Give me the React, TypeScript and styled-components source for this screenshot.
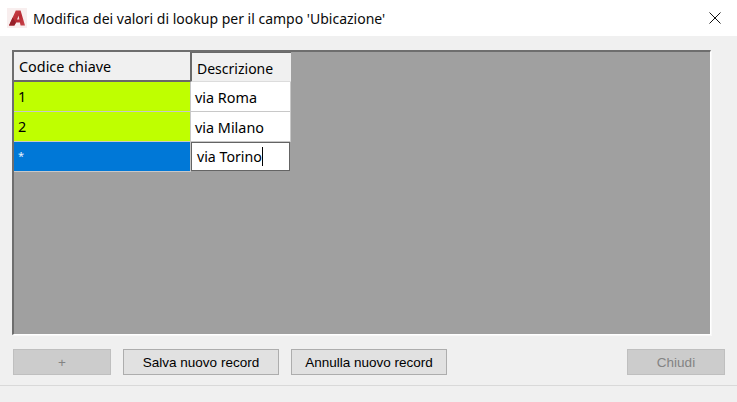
import React from "react";
import styled, { createGlobalStyle } from "styled-components";

const Global = createGlobalStyle`
  html, body { margin: 0; padding: 0; background: #f0f0f0; }
  #root { width: 737px; height: 402px; overflow: hidden; }
`;

const Dialog = styled.div`
  width: 737px;
  height: 402px;
  display: flex;
  flex-direction: column;
  background: #f0f0f0;
  font-family: "Noto Sans", "Open Sans", sans-serif;
  color: #000;
`;

const TitleBar = styled.header`
  height: 36px;
  flex: none;
  background: #fff;
  display: flex;
  align-items: center;
  padding: 0 16px 0 7px;
  box-sizing: border-box;
`;

const Title = styled.div`
  margin-left: 6px;
  font-size: 14px;
  flex: 1;
  white-space: nowrap;
  color: #0a0a0a;
`;

const Body = styled.main`
  flex: none;
  padding: 14px 26px 0 12px;
  height: 299px;
  box-sizing: border-box;
`;

const GridArea = styled.div`
  box-sizing: border-box;
  height: 285px;
  background: #a0a0a0;
  border: 2px solid #6e6e6e;
  border-right: 1px solid #fff;
  border-bottom: 1px solid #fff;
  box-shadow: 1px 1px 0 #f8f8f8;
`;

const Table = styled.div`
  display: grid;
  grid-template-columns: 177px 100px;
  grid-template-rows: 30px 30px 30px 30px;
  width: 277px;
`;

const Header = styled.div<{ $second?: boolean }>`
  box-sizing: border-box;
  background: #f0f0f0;
  font-size: ${(p) => (p.$second ? "14px" : "14.4px")};
  display: flex;
  align-items: center;
  padding-left: 5px;
  padding-top: ${(p) => (p.$second ? "2px" : "0")};
  margin-left: ${(p) => (p.$second ? "-1px" : "0")};
  border-bottom: ${(p) => (p.$second ? "1px solid #dcdcdc" : "2px solid #696969")};
  border-left: ${(p) => (p.$second ? "2px solid #696969" : "none")};
  border-top: ${(p) => (p.$second ? "1px solid #696969" : "none")};
`;

const KeyCell = styled.div<{ $active?: boolean }>`
  box-sizing: border-box;
  background: ${(p) => (p.$active ? "#0078d7" : "#bfff00")};
  color: ${(p) => (p.$active ? "#e8f2ff" : "#000")};
  font-size: ${(p) => (p.$active ? "11px" : "14.4px")};
  display: flex;
  align-items: center;
  padding-left: 4px;
  padding-bottom: ${(p) => (p.$active ? "2px" : "0")};
  border-right: 1px solid #c8c8c8;
  border-bottom: 1px solid #c8c8c8;
`;

const ValueCell = styled.div`
  box-sizing: border-box;
  background: #fff;
  font-size: 14.4px;
  display: flex;
  align-items: center;
  padding: 2px 0 0 4px;
  border-right: 1px solid #c8c8c8;
  border-bottom: 1px solid #c8c8c8;
`;

const EditCell = styled.div`
  box-sizing: border-box;
  background: #fff;
  font-size: 14.2px;
  display: flex;
  align-items: center;
  padding-left: 5px;
  margin: 0 1px 1px 0;
  border: 1px solid #646464;
`;

const Caret = styled.span`
  display: inline-block;
  width: 1px;
  height: 19px;
  background: #000;
`;

const Footer = styled.div`
  flex: none;
  height: 51px;
  box-sizing: border-box;
  padding: 14px 12px 0 13px;
  display: flex;
  gap: 12px;
  border-bottom: 1px solid #d9d9d9;
`;

const Button = styled.button<{ $w: number; $push?: boolean }>`
  width: ${(p) => p.$w}px;
  height: 26px;
  box-sizing: border-box;
  margin: 0 0 0 ${(p) => (p.$push ? "auto" : "0")};
  padding: 0;
  background: #e1e1e1;
  border: 1px solid #adadad;
  border-radius: 0;
  font-family: "Liberation Sans", Arial, sans-serif;
  font-size: 13.5px;
  color: #000;
  &:disabled {
    background: #cccccc;
    border-color: #bfbfbf;
    color: #838383;
  }
`;

const Logo = () => (
  <svg width="20" height="20" viewBox="0 0 20 20" aria-hidden="true">
    <defs>
      <linearGradient id="logoRed" x1="0" y1="0" x2="1" y2="1">
        <stop offset="0" stopColor="#cf4a4f" />
        <stop offset="0.55" stopColor="#b72a33" />
        <stop offset="1" stopColor="#c9454c" />
      </linearGradient>
    </defs>
    <rect width="20" height="20" fill="#f8eeee" />
    <path d="M2 17.5 L8.8 2.5 H13.6 L18 17.5 H13.6 L12.9 14.4 H9.2 L7.4 17.5 Z" fill="url(#logoRed)" />
    <path d="M10 11.4 L11.7 7.6 L12.3 11.4 Z" fill="#f4dada" />
    <path d="M2 17.5 L5.6 9.6 L8.8 14.4 L7.4 17.5 Z" fill="#962029" />
  </svg>
);

const Close = () => (
  <svg width="12" height="12" viewBox="0 0 12 12" aria-hidden="true">
    <path d="M0.5 0.5 L11.5 11.5 M11.5 0.5 L0.5 11.5" stroke="#111" strokeWidth="1" fill="none" />
  </svg>
);

export default function App() {
  return (
    <Dialog>
      <Global />
      <TitleBar>
        <Logo />
        <Title>Modifica dei valori di lookup per il campo 'Ubicazione'</Title>
        <Close />
      </TitleBar>
      <Body>
        <GridArea>
          <Table>
            <Header>Codice chiave</Header>
            <Header $second>Descrizione</Header>
            <KeyCell>1</KeyCell>
            <ValueCell>via Roma</ValueCell>
            <KeyCell>2</KeyCell>
            <ValueCell>via Milano</ValueCell>
            <KeyCell $active>*</KeyCell>
            <EditCell>via Torino<Caret /></EditCell>
          </Table>
        </GridArea>
      </Body>
      <Footer>
        <Button $w={98} disabled>+</Button>
        <Button $w={156}>Salva nuovo record</Button>
        <Button $w={156}>Annulla nuovo record</Button>
        <Button $w={98} $push disabled>Chiudi</Button>
      </Footer>
    </Dialog>
  );
}
